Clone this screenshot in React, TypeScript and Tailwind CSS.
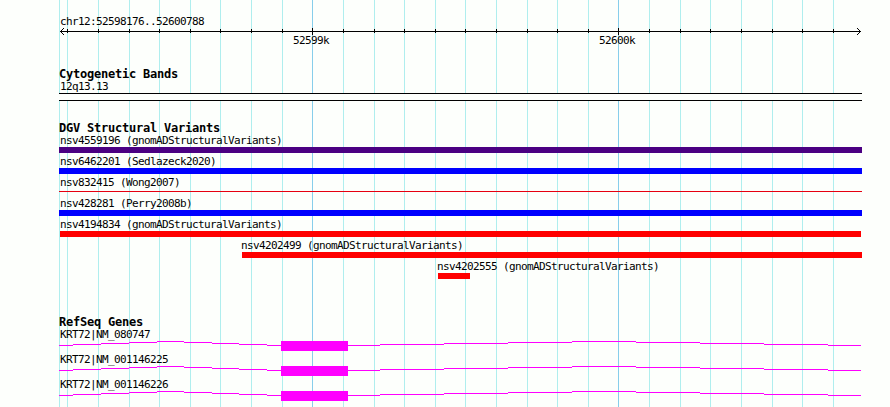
import React from "react";

type Variant = {
    label: string;
    indent: string;
    bar: string;
};

type Step = [number, number, number];

const majorLines = [312, 618];

const minorLines = [
    67, 98, 129, 159, 190, 220, 251, 282, 343, 374, 404, 435, 465, 496, 527,
    557, 588, 649, 680, 710, 741, 772, 802, 833,
];

const variants: Variant[] = [
    { label: "nsv4559196 (gnomADStructuralVariants)", indent: "pl-px", bar: "h-1.5 w-[803px] bg-[#4b0082]" },
    { label: "nsv6462201 (Sedlazeck2020)", indent: "pl-px", bar: "h-1.5 w-[803px] bg-[#0000ff]" },
    { label: "nsv832415 (Wong2007)", indent: "pl-px", bar: "mt-0.5 h-px w-[803px] bg-[#e60010]" },
    { label: "nsv428281 (Perry2008b)", indent: "pl-px", bar: "h-1.5 w-[803px] bg-[#0000ff]" },
    { label: "nsv4194834 (gnomADStructuralVariants)", indent: "pl-px", bar: "ml-px h-1.5 w-[801px] bg-[#ff0000]" },
    { label: "nsv4202499 (gnomADStructuralVariants)", indent: "pl-[182px]", bar: "ml-[183px] h-1.5 w-[620px] bg-[#ff0000]" },
    { label: "nsv4202555 (gnomADStructuralVariants)", indent: "pl-[378px]", bar: "ml-[379px] h-1.5 w-8 bg-[#ff0000]" },
];

const genes = ["KRT72|NM_080747", "KRT72|NM_001146225", "KRT72|NM_001146226"];

// [start, end, y] of each intron segment, relative to the track
const intronSteps: Step[] = [
    [0, 14, 4], [14, 42, 3], [42, 70, 2], [70, 98, 1], [98, 125, 0],
    [125, 153, 1], [153, 180, 2], [180, 208, 3], [208, 222, 4],
    [289, 321, 4], [321, 385, 3], [385, 449, 2], [449, 513, 1], [513, 577, 0],
    [577, 641, 1], [641, 705, 2], [705, 769, 3], [769, 802, 4],
];

const Grid = () => {
    return (
        <svg
            className="absolute inset-0"
            width="890"
            height="407"
            shapeRendering="crispEdges"
        >
            {[59, ...minorLines].map((x) => (
                <rect key={x} x={x} y={0} width={1} height={407} fill="#afeeee" />
            ))}
            {majorLines.map((x) => (
                <rect key={x} x={x} y={0} width={1} height={407} fill="#87ceeb" />
            ))}
        </svg>
    );
};

const Label = ({ text, className = "" }: { text: string; className?: string }) => {
    return (
        <div
            className={`h-[14px] whitespace-pre text-[11px] leading-[15px] tracking-[-0.622px] ${className}`}
        >
            {text}
        </div>
    );
};

const Heading = ({ text }: { text: string }) => {
    return (
        <h2 className="h-[10px] whitespace-pre text-[12px] font-bold leading-[11px] tracking-[-0.224px]">
            {text}
        </h2>
    );
};

const Ruler = () => {
    return (
        <div>
            <svg
                className="block"
                width="803"
                height="7"
                viewBox="59 28 803 7"
                shapeRendering="crispEdges"
            >
                <rect x={60} y={31} width={801} height={1} />
                {minorLines.map((x) => (
                    <rect key={x} x={x} y={29} width={1} height={4} />
                ))}
                {majorLines.map((x) => (
                    <rect key={x} x={x} y={28} width={1} height={7} />
                ))}
                {[1, 2, 3].map((d) => (
                    <g key={d}>
                        <rect x={60 + d} y={31 - d} width={1} height={1} />
                        <rect x={60 + d} y={31 + d} width={1} height={1} />
                        <rect x={860 - d} y={31 - d} width={1} height={1} />
                        <rect x={860 - d} y={31 + d} width={1} height={1} />
                    </g>
                ))}
            </svg>
            <div className="-mt-0.5 flex gap-[270px] pl-[234px]">
                <Label text="52599k" className="w-9" />
                <Label text="52600k" className="w-9" />
            </div>
        </div>
    );
};

const GeneTrack = ({ name }: { name: string }) => {
    return (
        <div className="h-[25px]">
            <Label text={name} className="pl-px" />
            <svg className="block" width="803" height="10" shapeRendering="crispEdges">
                {intronSteps.map(([start, end, y]) => (
                    <rect key={start} x={start} y={y} width={end - start} height={1} fill="#ff00ff" />
                ))}
                <rect x={222} y={0} width={67} height={10} fill="#ff00ff" />
            </svg>
        </div>
    );
};

const App = () => {
    return (
        <main className="relative h-[407px] w-[890px] overflow-hidden bg-[#fdfffc] font-['DejaVu_Sans_Mono',monospace] text-black">
            <Grid />
            <div className="relative pl-[59px] pt-[14px]">
                <Label text="chr12:52598176..52600788" className="pl-px" />
                <Ruler />

                <section className="mt-[22px]">
                    <Heading text="Cytogenetic Bands" />
                    <Label text="12q13.13" className="pl-px" />
                    <div className="h-2 w-[803px] border-y border-black bg-[#fdfffc]" />
                </section>

                <section className="mt-[22px]">
                    <Heading text="DGV Structural Variants" />
                    {variants.map((variant) => (
                        <div key={variant.label} className="h-[21px]">
                            <Label text={variant.label} className={variant.indent} />
                            <div className={variant.bar} />
                        </div>
                    ))}
                </section>

                <section className="mt-[37px]">
                    <Heading text="RefSeq Genes" />
                    {genes.map((gene) => (
                        <GeneTrack key={gene} name={gene} />
                    ))}
                </section>
            </div>
        </main>
    );
};

export default App;
